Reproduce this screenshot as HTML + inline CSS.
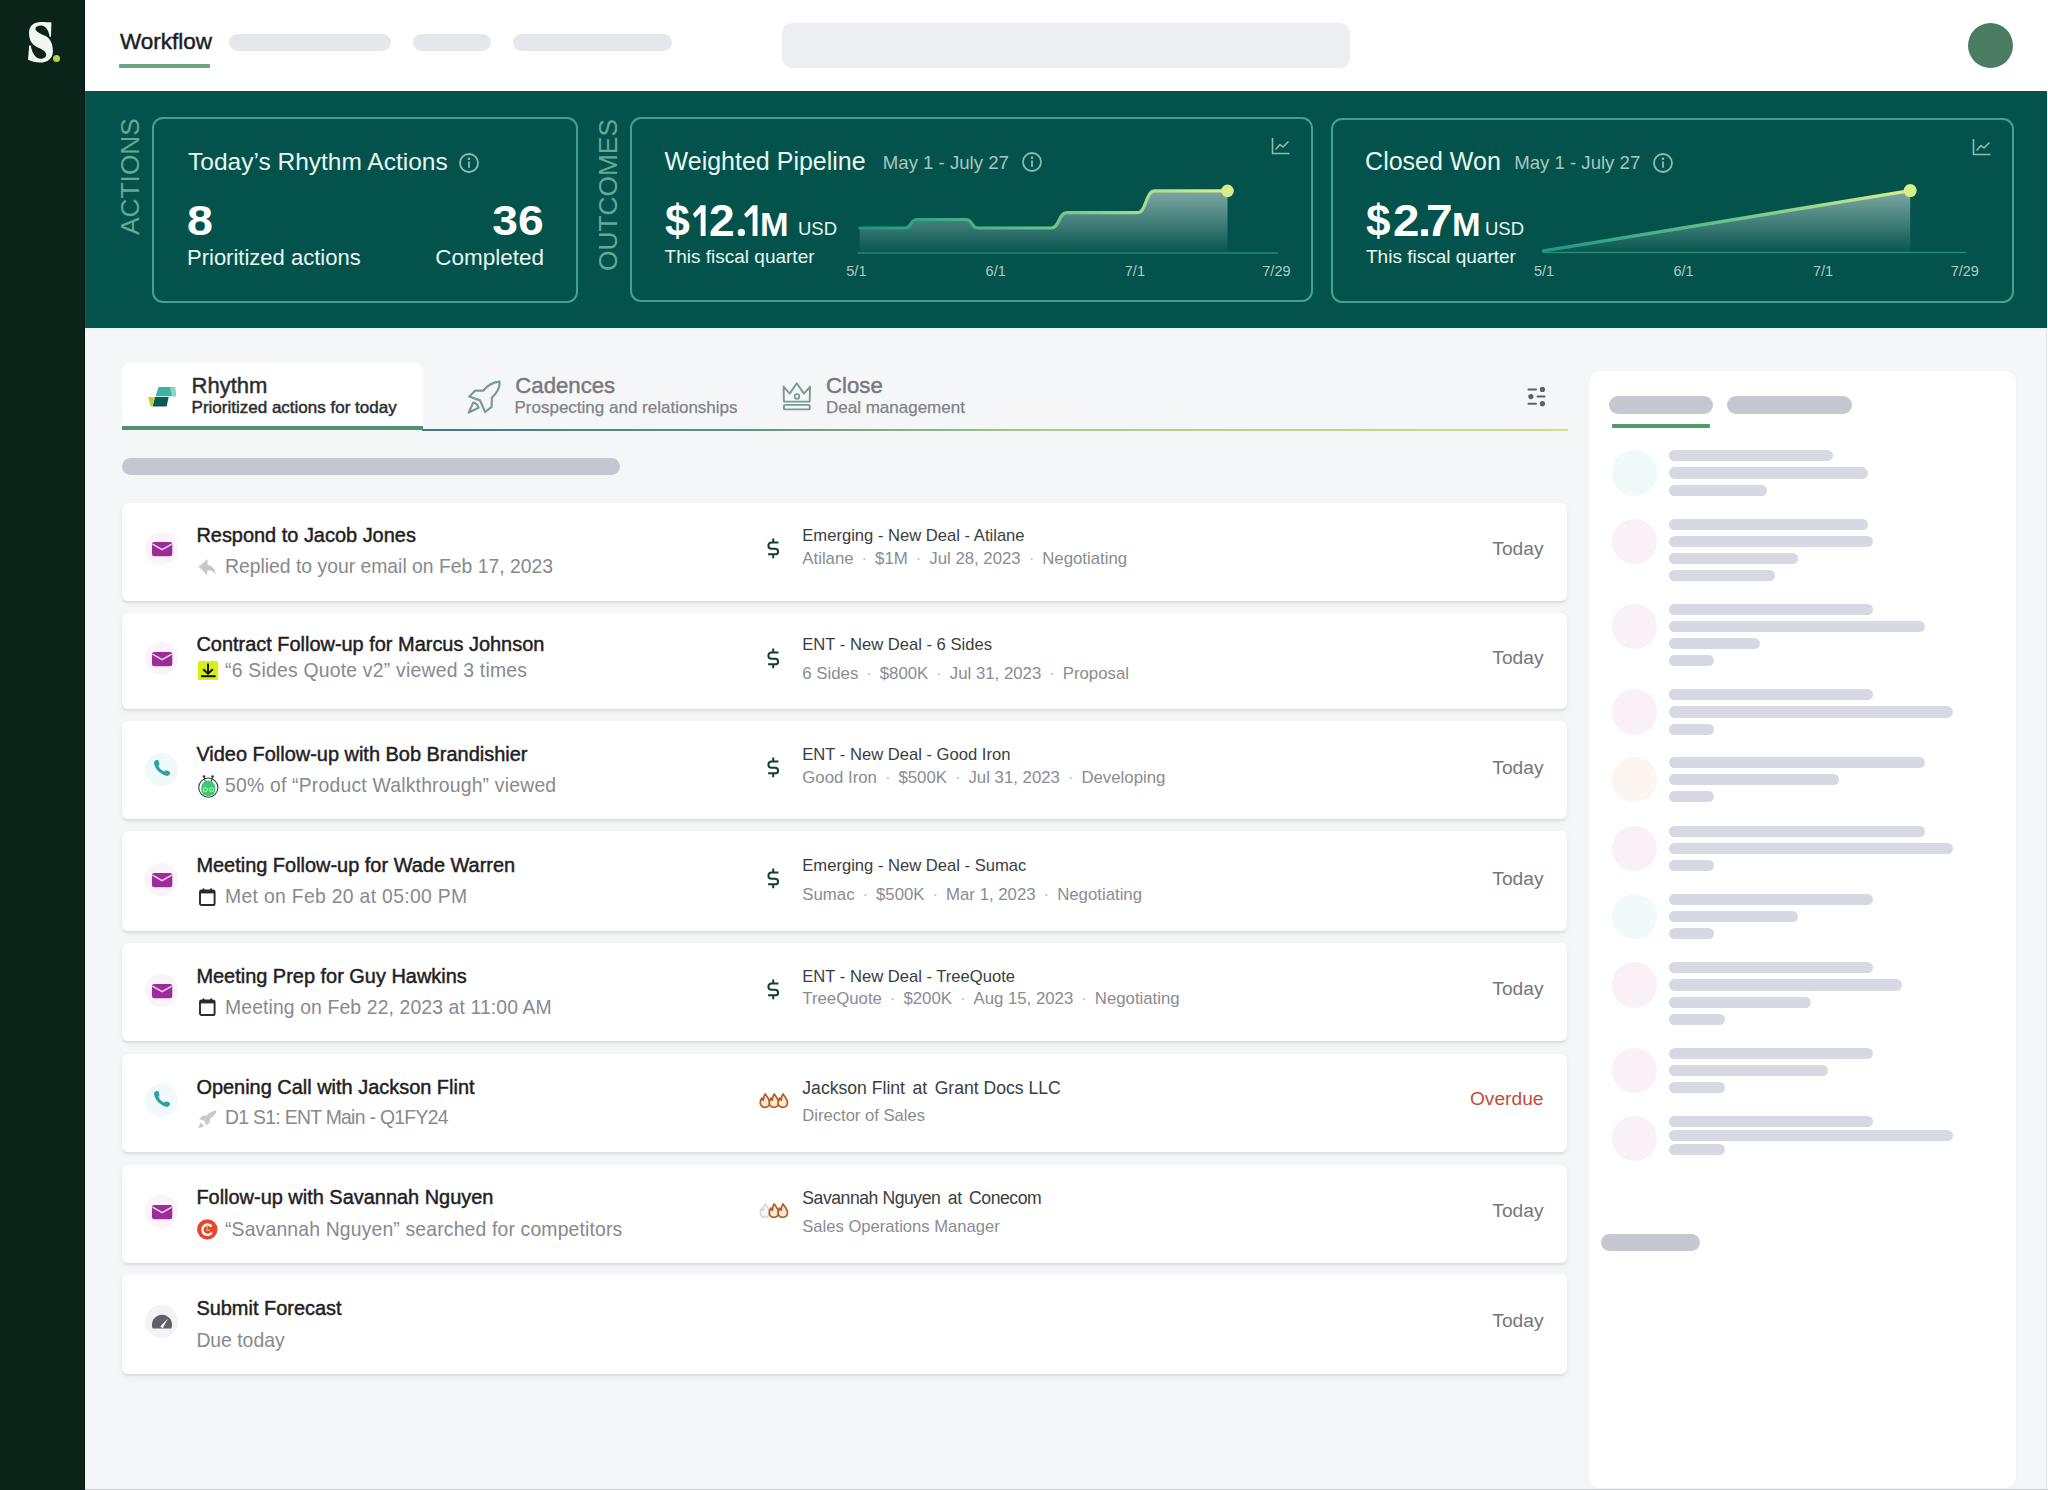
<!DOCTYPE html><html><head><meta charset="utf-8"><style>
*{box-sizing:border-box;margin:0;padding:0}
html,body{width:2048px;height:1490px;overflow:hidden;background:#f5f6f8;font-family:"Liberation Sans",sans-serif}
.t{position:absolute;white-space:nowrap;line-height:1}
.r{position:absolute}
.med{-webkit-text-stroke:0.45px currentColor}
.med2{-webkit-text-stroke:0.25px currentColor}
svg{position:absolute;overflow:visible}
</style></head><body>
<div class="r" style="left:0px;top:0px;width:85px;height:1490px;background:#0a2419;"></div>
<div class="r" style="left:84px;top:0px;width:1px;height:1490px;background:#06160f;"></div>
<svg style="left:0;top:0" width="85" height="80" viewBox="0 0 85 80"><path d="M51.4 22.4 L51 36.8 L49.6 36.8 C48.6 29.4 45.2 25.4 41.2 25.4 C37.6 25.4 35.4 26.8 35.4 28.8 C35.4 31.2 39.6 33.6 45 35.8 C50.6 38.2 52.9 44.4 52.9 51.4 C52.9 58.2 47.6 62.5 40.2 62.5 C35.6 62.5 31.2 61.4 28 59.8 L29.2 45.6 L30.8 45.6 C32 53 35.6 58.8 40.6 58.8 C44 58.8 46.2 57.2 46.2 54.8 C46.2 51.4 42.2 49.2 37.2 47.2 C31.6 44.8 29 39.4 29 32.6 C29 26 34 22 41 22 C45 22 48.4 22.4 51.4 22.4 Z" fill="#f4f6f2"/></svg>
<div class="r" style="left:52.5px;top:54.5px;width:7.5px;height:7.5px;border-radius:50%;background:#b5d334"></div>
<div class="r" style="left:85px;top:0px;width:1963px;height:91px;background:#ffffff;"></div>
<div class="t med" style="left:120.0px;top:30.5px;font-size:22.5px;color:#1c1d1f;font-weight:400;">Workflow</div>
<div class="r" style="left:119px;top:64px;width:91px;height:4px;background:#6aa57e;border-radius:1px"></div>
<div class="r" style="left:229px;top:34px;width:162px;height:17px;background:#e5e7ed;border-radius:9px"></div>
<div class="r" style="left:413px;top:34px;width:78px;height:17px;background:#e5e7ed;border-radius:9px"></div>
<div class="r" style="left:513px;top:34px;width:159px;height:17px;background:#e5e7ed;border-radius:9px"></div>
<div class="r" style="left:782px;top:23px;width:568px;height:45px;background:#eceef2;border-radius:10px"></div>
<div class="r" style="left:1967.5px;top:22.5px;width:45.5px;height:45.5px;border-radius:50%;background:#4a7b63"></div>
<div class="r" style="left:85px;top:91px;width:1962px;height:237px;background:#03534c;"></div>
<div class="r" style="left:85px;top:328px;width:1963px;height:3px;background:#e9f6f3;"></div>
<div class="r" style="left:85px;top:91px;width:1.3px;height:237px;background:#175a51;"></div>
<div class="r" style="left:2047px;top:91px;width:1px;height:237px;background:#dff3ef;"></div>
<div class="r" style="left:152px;top:117px;width:426px;height:185.5px;border:2px solid #3fa390;border-radius:11px"></div>
<div class="r" style="left:630px;top:117px;width:683px;height:185px;border:2px solid #3fa390;border-radius:11px"></div>
<div class="r" style="left:1331px;top:117.5px;width:683px;height:185px;border:2px solid #3fa390;border-radius:11px"></div>
<div class="t" style="left:117.4px;top:234.5px;font-size:26.3px;color:#66a898;transform-origin:0 0;transform:rotate(-90deg)">ACTIONS</div>
<div class="t" style="left:595.3px;top:270.5px;font-size:26.3px;color:#66a898;transform-origin:0 0;transform:rotate(-90deg)">OUTCOMES</div>
<div class="t " style="left:188.0px;top:150.3px;font-size:24.5px;color:#e9f6f1;font-weight:400;">Today’s Rhythm Actions</div>
<svg style="left:457.6px;top:152.4px" width="22" height="22" viewBox="0 0 22 22"><circle cx="11" cy="11" r="9" fill="none" stroke="#8dbcb1" stroke-width="1.8"/><circle cx="11" cy="6.8" r="1.3" fill="#8dbcb1"/><rect x="10.1" y="9.2" width="1.8" height="6.8" rx="0.8" fill="#8dbcb1"/></svg>
<div class="t " style="left:187.0px;top:199.9px;font-size:42px;color:#ffffff;font-weight:700;transform:scaleX(1.11);transform-origin:0 0">8</div>
<div class="t " style="right:1504.5px;top:199.9px;font-size:42px;color:#ffffff;font-weight:700;transform:scaleX(1.1);transform-origin:100% 0">36</div>
<div class="t " style="left:187.0px;top:247.2px;font-size:22px;color:#e9f6f1;font-weight:400;">Prioritized actions</div>
<div class="t " style="right:1504.0px;top:246.8px;font-size:22.5px;color:#e9f6f1;font-weight:400;">Completed</div>
<div class="t " style="left:664.6px;top:149.3px;font-size:25px;color:#e9f6f1;font-weight:400;">Weighted Pipeline</div>
<div class="t " style="left:1365.1px;top:149.3px;font-size:25px;color:#e9f6f1;font-weight:400;">Closed Won</div>
<div class="t " style="left:882.8px;top:153.6px;font-size:18.6px;color:#aac6bf;font-weight:400;">May 1 - July 27</div>
<div class="t " style="left:1514.2px;top:153.6px;font-size:18.6px;color:#aac6bf;font-weight:400;">May 1 - July 27</div>
<svg style="left:1020.7px;top:151.4px" width="22" height="22" viewBox="0 0 22 22"><circle cx="11" cy="11" r="9" fill="none" stroke="#8dbcb1" stroke-width="1.8"/><circle cx="11" cy="6.8" r="1.3" fill="#8dbcb1"/><rect x="10.1" y="9.2" width="1.8" height="6.8" rx="0.8" fill="#8dbcb1"/></svg>
<svg style="left:1651.6px;top:151.5px" width="22" height="22" viewBox="0 0 22 22"><circle cx="11" cy="11" r="9" fill="none" stroke="#8dbcb1" stroke-width="1.8"/><circle cx="11" cy="6.8" r="1.3" fill="#8dbcb1"/><rect x="10.1" y="9.2" width="1.8" height="6.8" rx="0.8" fill="#8dbcb1"/></svg>
<div class="t" style="left:665.21px;top:198.75px;font-size:44px;color:#fff;font-weight:700;transform-origin:0 0;transform:scaleX(1.014)">$</div>
<div class="t" style="left:709.30px;top:198.75px;font-size:44px;color:#fff;font-weight:700;transform-origin:0 0;transform:scaleX(1.048)">2</div>
<svg style="left:0;top:0" width="800" height="260" viewBox="0 0 800 260"><path d="M700.7 205.3 H705.6 V236 H700.7 V212.6 L695.2 217.8 L692.8 214.2 Z" fill="#fff"/><path d="M752.6 205.3 H757.5 V236 H752.6 V212.6 L746.4 217.8 L744 214.2 Z" fill="#fff"/><circle cx="741.4" cy="232.4" r="3.7" fill="#fff"/></svg>
<div class="t" style="left:760.20px;top:207.81px;font-size:33.3px;color:#fff;font-weight:700;transform-origin:0 0;transform:scaleX(1.031)">M</div>
<div class="t " style="left:798.0px;top:219.9px;font-size:18.5px;color:#e9f6f1;font-weight:400;">USD</div>
<div class="t" style="left:1366.02px;top:198.55px;font-size:44px;color:#fff;font-weight:700;transform-origin:0 0;transform:scaleX(1.001)">$</div>
<div class="t" style="left:1392.75px;top:198.55px;font-size:44px;color:#fff;font-weight:700;transform-origin:0 0;transform:scaleX(1.081)">2</div>
<div class="t" style="left:1418.23px;top:198.55px;font-size:44px;color:#fff;font-weight:700;transform-origin:0 0;transform:scaleX(1.063)">.</div>
<div class="t" style="left:1425.94px;top:198.55px;font-size:44px;color:#fff;font-weight:700;transform-origin:0 0;transform:scaleX(1.090)">7</div>
<div class="t" style="left:1451.50px;top:207.61px;font-size:33.3px;color:#fff;font-weight:700;transform-origin:0 0;transform:scaleX(1.031)">M</div>
<div class="t " style="left:1485.0px;top:219.9px;font-size:18.5px;color:#e9f6f1;font-weight:400;">USD</div>
<div class="t " style="left:664.6px;top:246.8px;font-size:19px;color:#e9f6f1;font-weight:400;">This fiscal quarter</div>
<div class="t " style="left:1366.0px;top:246.6px;font-size:19px;color:#e9f6f1;font-weight:400;">This fiscal quarter</div>
<svg style="left:1271px;top:137px" width="20" height="18" viewBox="0 0 20 18"><path d="M1.5 1 V16.5 H18.5" fill="none" stroke="#8dbcb1" stroke-width="1.6"/><path d="M5 12 L9 7.5 L12 10 L17 5" fill="none" stroke="#8dbcb1" stroke-width="1.6" stroke-linejoin="round" stroke-linecap="round"/></svg>
<svg style="left:1972px;top:138px" width="20" height="18" viewBox="0 0 20 18"><path d="M1.5 1 V16.5 H18.5" fill="none" stroke="#8dbcb1" stroke-width="1.6"/><path d="M5 12 L9 7.5 L12 10 L17 5" fill="none" stroke="#8dbcb1" stroke-width="1.6" stroke-linejoin="round" stroke-linecap="round"/></svg>
<svg style="left:0;top:0" width="2048" height="340" viewBox="0 0 2048 340">
<defs>
<linearGradient id="lg1" gradientUnits="userSpaceOnUse" x1="860" y1="0" x2="1228" y2="0"><stop offset="0" stop-color="#1a9880"/><stop offset="0.5" stop-color="#66c48c"/><stop offset="1" stop-color="#d9ef8b"/></linearGradient>
<linearGradient id="lg2" gradientUnits="userSpaceOnUse" x1="1543" y1="0" x2="1911" y2="0"><stop offset="0" stop-color="#1a9880"/><stop offset="0.5" stop-color="#66c48c"/><stop offset="1" stop-color="#d9ef8b"/></linearGradient>
<linearGradient id="fg1" gradientUnits="userSpaceOnUse" x1="0" y1="190" x2="0" y2="252"><stop offset="0" stop-color="#ffffff" stop-opacity="0.5"/><stop offset="1" stop-color="#ffffff" stop-opacity="0.02"/></linearGradient>
</defs>
<path d="M859.8 252 V228 H905 C912 228 910 219.5 917 219.5 H966 C973 219.5 971 228 978 228 H1051 C1060 228 1058 212.7 1067 212.7 H1137 C1147 212.7 1145 190.9 1155 190.9 H1227.5 V252 Z" fill="url(#fg1)"/>
<line x1="857.5" y1="253" x2="1278" y2="253" stroke="#2a8675" stroke-width="1.6"/>
<path d="M859.8 228 H905 C912 228 910 219.5 917 219.5 H966 C973 219.5 971 228 978 228 H1051 C1060 228 1058 212.7 1067 212.7 H1137 C1147 212.7 1145 190.9 1155 190.9 H1227.5" fill="none" stroke="url(#lg1)" stroke-width="3.2" stroke-linecap="round"/>
<circle cx="1227.5" cy="190.9" r="6.3" fill="#d8ee8a"/>
<path d="M1543.4 252 L1543.4 250.9 L1910.2 190.6 V252 Z" fill="url(#fg1)"/>
<line x1="1543" y1="252.5" x2="1966.4" y2="252.5" stroke="#2a8675" stroke-width="1.6"/>
<path d="M1543.4 250.9 L1910.2 190.6" fill="none" stroke="url(#lg2)" stroke-width="3.4" stroke-linecap="round"/>
<circle cx="1910.2" cy="190.6" r="6.5" fill="#d8ee8a"/>
</svg>
<div class="t " style="left:846.3px;top:263.7px;font-size:14.5px;color:#b0cbc5;font-weight:400;">5/1</div>
<div class="t " style="left:985.6px;top:263.7px;font-size:14.5px;color:#b0cbc5;font-weight:400;">6/1</div>
<div class="t " style="left:1124.8px;top:263.7px;font-size:14.5px;color:#b0cbc5;font-weight:400;">7/1</div>
<div class="t " style="left:1262.3px;top:263.7px;font-size:14.5px;color:#b0cbc5;font-weight:400;">7/29</div>
<div class="t " style="left:1534.0px;top:263.7px;font-size:14.5px;color:#b0cbc5;font-weight:400;">5/1</div>
<div class="t " style="left:1673.5px;top:263.7px;font-size:14.5px;color:#b0cbc5;font-weight:400;">6/1</div>
<div class="t " style="left:1813.0px;top:263.7px;font-size:14.5px;color:#b0cbc5;font-weight:400;">7/1</div>
<div class="t " style="left:1950.7px;top:263.7px;font-size:14.5px;color:#b0cbc5;font-weight:400;">7/29</div>
<div class="r" style="left:122px;top:362.5px;width:300.5px;height:67px;background:#fff;border-radius:8px 8px 0 0"></div>
<div class="r" style="left:422px;top:428.8px;width:1146px;height:1.8px;background:linear-gradient(90deg,#3f7a78 0%,#62977f 30%,#a9cc86 55%,#c9e28c 100%)"></div>
<div class="r" style="left:122px;top:426.3px;width:300.5px;height:4px;background:#4f9272;"></div>
<svg style="left:145px;top:384px" width="34" height="26" viewBox="0 0 34 26"><polygon points="13.5,3 30,3 31,12.2 10.6,12.2" fill="#3ab4a7"/><polygon points="25,3.5 30,3 31,12.2 27,12.2" fill="#8fd3cb"/><polygon points="10,13 23.7,13 21.6,22.4 7.6,22.4" fill="#0c5a4f"/><polygon points="3,13 10,13 7.6,22.4 5.7,22.4" fill="#b7d43a"/></svg>
<div class="t med" style="left:191.6px;top:375.1px;font-size:22px;color:#2a2d32;font-weight:400;">Rhythm</div>
<div class="t med" style="left:191.6px;top:399.4px;font-size:17px;color:#2a2d32;font-weight:400;">Prioritized actions for today</div>
<svg style="left:460px;top:372px" width="60" height="48" viewBox="0 0 60 48"><path d="M39.6 9.7 C34 10 28 13 23.2 18.7 L15 18.7 L9.3 24.5 L20 28.4 L25.1 40 L31.6 34.8 L31.9 25.8 C37 21 40 15 39.6 9.7 Z" fill="none" stroke="#7b9b94" stroke-width="2.2" stroke-linejoin="round"/><path d="M8.7 40.6 L13.2 30.6 C15.5 30.8 17.6 32.5 18.6 35.8 Z" fill="none" stroke="#7b9b94" stroke-width="2.2" stroke-linejoin="round"/></svg>
<div class="t med" style="left:515.3px;top:374.9px;font-size:22.2px;color:#77797e;font-weight:400;">Cadences</div>
<div class="t med2" style="left:514.5px;top:399.4px;font-size:17px;color:#818389;font-weight:400;">Prospecting and relationships</div>
<svg style="left:772px;top:372px" width="50" height="48" viewBox="0 0 50 48"><path d="M11.9 29.6 L11.6 14.5 L17.7 21.6 L24.8 11.3 L31.9 21.6 L38 14.8 L37.7 29.6 Z" fill="none" stroke="#7b9b94" stroke-width="1.9" stroke-linejoin="round"/><circle cx="25" cy="24.5" r="2.3" fill="none" stroke="#7b9b94" stroke-width="1.7"/><rect x="11.9" y="32.9" width="25.8" height="4.5" rx="1" fill="none" stroke="#7b9b94" stroke-width="1.9"/></svg>
<div class="t med" style="left:826.0px;top:374.9px;font-size:22.2px;color:#77797e;font-weight:400;">Close</div>
<div class="t med2" style="left:826.0px;top:399.4px;font-size:17px;color:#818389;font-weight:400;">Deal management</div>
<svg style="left:1520px;top:380px" width="32" height="32" viewBox="0 0 32 32"><g stroke="#5d6067" stroke-width="2" stroke-linecap="round"><line x1="8.5" y1="9.4" x2="16" y2="9.4"/><line x1="17.5" y1="16.6" x2="24.5" y2="16.6"/><line x1="8.5" y1="23.7" x2="16" y2="23.7"/></g><g fill="#5d6067"><circle cx="22.4" cy="9.4" r="2.6"/><circle cx="10.9" cy="16.6" r="2.6"/><circle cx="22.4" cy="23.7" r="2.6"/></g></svg>
<div class="r" style="left:122px;top:457.8px;width:498px;height:17px;background:#c4c7d0;border-radius:9px"></div>
<div class="r" style="left:122px;top:502.5px;width:1444.5px;height:98.5px;background:#fff;border-radius:6px;box-shadow:0 1.5px 2px rgba(30,35,50,0.09),0 3px 8px rgba(30,35,50,0.035)"></div>
<div class="r" style="left:145.1px;top:531.8px;width:33px;height:33px;border-radius:50%;background:#fbf3fa"></div>
<svg style="left:150.9px;top:539.8px" width="22" height="18" viewBox="0 0 22 18"><rect x="1" y="2" width="20.3" height="14.2" rx="2.2" fill="#9a2d97"/><path d="M1.5 4.2 L11.1 9.6 L20.8 4.2" fill="none" stroke="#f6d3f3" stroke-width="1.5"/></svg>
<div class="t med" style="left:196.4px;top:526.1px;font-size:19.95px;color:#1f2023;font-weight:400;">Respond to Jacob Jones</div>
<svg style="left:194px;top:555.0px" width="28" height="25" viewBox="0 0 28 25"><path d="M13.4 4.2 L4.6 11.8 L13.1 20.2 L13.4 15.3 C17 15.2 19.8 16.6 21.9 19.4 C21.2 14.4 18 10.6 13.6 9.8 Z" fill="#c6c6cb"/><path d="M9.6 7.8 L5.6 11.8 L9.4 15.8" fill="none" stroke="#d9d9de" stroke-width="1"/></svg>
<div class="t " style="left:225.0px;top:557.1px;font-size:19.35px;color:#87898e;font-weight:400;letter-spacing:0.00px">Replied to your email on Feb 17, 2023</div>
<svg style="left:767.2px;top:538.4px" width="14" height="22" viewBox="0 0 14 22"><path d="M6.2 0.6 V4.4 M6.2 16.2 V20.2 M11.4 4.6 H4.6 C2.4 4.6 1.4 5.8 1.4 7.8 C1.4 9.8 2.6 10.8 4.6 10.8 H8 C10 10.8 11.1 11.9 11.1 13.9 C11.1 15.8 10 16.3 8 16.3 H1.1" fill="none" stroke="#123f2f" stroke-width="2"/></svg>
<div class="t " style="left:802.3px;top:527.9px;font-size:16.6px;color:#3b3d41;font-weight:400;">Emerging - New Deal - Atilane</div>
<div class="t " style="left:802.3px;top:550.5px;font-size:16.8px;color:#8a8c91;font-weight:400;"><span>Atilane</span><span style="display:inline-block;width:21.5px;text-align:center;color:#bbbdc1">·</span><span>$1M</span><span style="display:inline-block;width:21.5px;text-align:center;color:#bbbdc1">·</span><span>Jul 28, 2023</span><span style="display:inline-block;width:21.5px;text-align:center;color:#bbbdc1">·</span><span>Negotiating</span></div>
<div class="t " style="right:504.5px;top:539.1px;font-size:19.2px;color:#75777c;font-weight:400;">Today</div>
<div class="r" style="left:122px;top:613.2px;width:1444.5px;height:95.6px;background:#fff;border-radius:6px;box-shadow:0 1.5px 2px rgba(30,35,50,0.09),0 3px 8px rgba(30,35,50,0.035)"></div>
<div class="r" style="left:145.1px;top:642.4px;width:33px;height:33px;border-radius:50%;background:#fbf3fa"></div>
<svg style="left:150.9px;top:650.4px" width="22" height="18" viewBox="0 0 22 18"><rect x="1" y="2" width="20.3" height="14.2" rx="2.2" fill="#9a2d97"/><path d="M1.5 4.2 L11.1 9.6 L20.8 4.2" fill="none" stroke="#f6d3f3" stroke-width="1.5"/></svg>
<div class="t med" style="left:196.4px;top:635.1px;font-size:19.95px;color:#1f2023;font-weight:400;">Contract Follow-up for Marcus Johnson</div>
<svg style="left:197.5px;top:661.3px" width="20" height="19" viewBox="0 0 20 19"><rect x="0" y="0" width="20" height="19" rx="1.5" fill="#d9ef0c"/><path d="M10 2.4 V12.6 M5.2 8.2 L10 12.6 L14.8 8.2" fill="none" stroke="#111" stroke-width="1.9"/><rect x="3" y="14.2" width="14.6" height="2" fill="#111"/></svg>
<div class="t " style="left:225.0px;top:661.1px;font-size:19.35px;color:#87898e;font-weight:400;letter-spacing:0.23px">“6 Sides Quote v2” viewed 3 times</div>
<svg style="left:767.2px;top:647.8px" width="14" height="22" viewBox="0 0 14 22"><path d="M6.2 0.6 V4.4 M6.2 16.2 V20.2 M11.4 4.6 H4.6 C2.4 4.6 1.4 5.8 1.4 7.8 C1.4 9.8 2.6 10.8 4.6 10.8 H8 C10 10.8 11.1 11.9 11.1 13.9 C11.1 15.8 10 16.3 8 16.3 H1.1" fill="none" stroke="#123f2f" stroke-width="2"/></svg>
<div class="t " style="left:802.3px;top:637.3px;font-size:16.6px;color:#3b3d41;font-weight:400;">ENT - New Deal - 6 Sides</div>
<div class="t " style="left:802.3px;top:665.8px;font-size:16.8px;color:#8a8c91;font-weight:400;"><span>6 Sides</span><span style="display:inline-block;width:21.5px;text-align:center;color:#bbbdc1">·</span><span>$800K</span><span style="display:inline-block;width:21.5px;text-align:center;color:#bbbdc1">·</span><span>Jul 31, 2023</span><span style="display:inline-block;width:21.5px;text-align:center;color:#bbbdc1">·</span><span>Proposal</span></div>
<div class="t " style="right:504.5px;top:648.2px;font-size:19.2px;color:#75777c;font-weight:400;">Today</div>
<div class="r" style="left:122px;top:721px;width:1444.5px;height:98.3px;background:#fff;border-radius:6px;box-shadow:0 1.5px 2px rgba(30,35,50,0.09),0 3px 8px rgba(30,35,50,0.035)"></div>
<div class="r" style="left:145.1px;top:752.8px;width:33px;height:33px;border-radius:50%;background:#f0fafa"></div>
<svg style="left:151.9px;top:757.8px" width="20" height="20" viewBox="0 0 20 20"><path d="M3.8 2.2 C5.2 1.5 6.4 2 6.8 3.2 L7.4 5.6 C7.6 6.6 7 7.2 6.4 7.6 C7.3 10.4 9.4 12.6 12.2 13.6 C12.6 13 13.3 12.4 14.3 12.6 L16.8 13.2 C18 13.6 18.4 14.8 17.8 16.1 C17.1 17.6 15.6 18.2 14 17.8 C8.6 16.4 3.6 11.4 2.2 6 C1.8 4.4 2.4 2.9 3.8 2.2 Z" fill="#2ba3a3"/></svg>
<div class="t med" style="left:196.4px;top:745.4px;font-size:19.95px;color:#1f2023;font-weight:400;">Video Follow-up with Bob Brandishier</div>
<svg style="left:197.5px;top:774.7px" width="21" height="23" viewBox="0 0 21 23"><circle cx="10.3" cy="12.6" r="9.6" fill="#fff" stroke="#3a3d3f" stroke-width="1.1"/><path d="M3.2 14 C3.2 9 6 5.5 10.3 5.5 C14.6 5.5 17.4 9 17.4 14 C17.4 18.5 14.5 21 10.3 21 C6.1 21 3.2 18.5 3.2 14 Z" fill="#3ccb6c"/><circle cx="7.3" cy="14.7" r="2" fill="none" stroke="#c8f7d5" stroke-width="1"/><circle cx="13.6" cy="14.7" r="2" fill="none" stroke="#c8f7d5" stroke-width="1"/><path d="M6.2 2 L7.2 6.5 M14.4 2 L13.4 6.5" stroke="#3a3d3f" stroke-width="1"/><circle cx="6" cy="1.6" r="1.4" fill="#3a4a4a"/><circle cx="14.6" cy="1.6" r="1.4" fill="#3a4a4a"/></svg>
<div class="t " style="left:225.0px;top:776.3px;font-size:19.35px;color:#87898e;font-weight:400;letter-spacing:0.21px">50% of “Product Walkthrough” viewed</div>
<svg style="left:767.2px;top:757.1px" width="14" height="22" viewBox="0 0 14 22"><path d="M6.2 0.6 V4.4 M6.2 16.2 V20.2 M11.4 4.6 H4.6 C2.4 4.6 1.4 5.8 1.4 7.8 C1.4 9.8 2.6 10.8 4.6 10.8 H8 C10 10.8 11.1 11.9 11.1 13.9 C11.1 15.8 10 16.3 8 16.3 H1.1" fill="none" stroke="#123f2f" stroke-width="2"/></svg>
<div class="t " style="left:802.3px;top:746.6px;font-size:16.6px;color:#3b3d41;font-weight:400;">ENT - New Deal - Good Iron</div>
<div class="t " style="left:802.3px;top:769.5px;font-size:16.8px;color:#8a8c91;font-weight:400;"><span>Good Iron</span><span style="display:inline-block;width:21.5px;text-align:center;color:#bbbdc1">·</span><span>$500K</span><span style="display:inline-block;width:21.5px;text-align:center;color:#bbbdc1">·</span><span>Jul 31, 2023</span><span style="display:inline-block;width:21.5px;text-align:center;color:#bbbdc1">·</span><span>Developing</span></div>
<div class="t " style="right:504.5px;top:758.2px;font-size:19.2px;color:#75777c;font-weight:400;">Today</div>
<div class="r" style="left:122px;top:831.1px;width:1444.5px;height:99.9px;background:#fff;border-radius:6px;box-shadow:0 1.5px 2px rgba(30,35,50,0.09),0 3px 8px rgba(30,35,50,0.035)"></div>
<div class="r" style="left:145.1px;top:863.3px;width:33px;height:33px;border-radius:50%;background:#fbf3fa"></div>
<svg style="left:150.9px;top:871.3px" width="22" height="18" viewBox="0 0 22 18"><rect x="1" y="2" width="20.3" height="14.2" rx="2.2" fill="#9a2d97"/><path d="M1.5 4.2 L11.1 9.6 L20.8 4.2" fill="none" stroke="#f6d3f3" stroke-width="1.5"/></svg>
<div class="t med" style="left:196.4px;top:855.9px;font-size:19.95px;color:#1f2023;font-weight:400;">Meeting Follow-up for Wade Warren</div>
<svg style="left:199px;top:887.6px" width="17" height="18" viewBox="0 0 17 18"><rect x="1" y="2.4" width="14.6" height="14.6" rx="1.6" fill="none" stroke="#2a2a2c" stroke-width="1.9"/><rect x="1" y="2.4" width="14.6" height="3" fill="#2a2a2c"/><rect x="3.6" y="0.3" width="1.8" height="3" rx="0.8" fill="#2a2a2c"/><rect x="11.2" y="0.3" width="1.8" height="3" rx="0.8" fill="#2a2a2c"/></svg>
<div class="t " style="left:225.0px;top:886.8px;font-size:19.35px;color:#87898e;font-weight:400;letter-spacing:0.32px">Met on Feb 20 at 05:00 PM</div>
<svg style="left:767.2px;top:868.4px" width="14" height="22" viewBox="0 0 14 22"><path d="M6.2 0.6 V4.4 M6.2 16.2 V20.2 M11.4 4.6 H4.6 C2.4 4.6 1.4 5.8 1.4 7.8 C1.4 9.8 2.6 10.8 4.6 10.8 H8 C10 10.8 11.1 11.9 11.1 13.9 C11.1 15.8 10 16.3 8 16.3 H1.1" fill="none" stroke="#123f2f" stroke-width="2"/></svg>
<div class="t " style="left:802.3px;top:857.9px;font-size:16.6px;color:#3b3d41;font-weight:400;">Emerging - New Deal - Sumac</div>
<div class="t " style="left:802.3px;top:886.6px;font-size:16.8px;color:#8a8c91;font-weight:400;"><span>Sumac</span><span style="display:inline-block;width:21.5px;text-align:center;color:#bbbdc1">·</span><span>$500K</span><span style="display:inline-block;width:21.5px;text-align:center;color:#bbbdc1">·</span><span>Mar 1, 2023</span><span style="display:inline-block;width:21.5px;text-align:center;color:#bbbdc1">·</span><span>Negotiating</span></div>
<div class="t " style="right:504.5px;top:868.7px;font-size:19.2px;color:#75777c;font-weight:400;">Today</div>
<div class="r" style="left:122px;top:942.8px;width:1444.5px;height:97.9px;background:#fff;border-radius:6px;box-shadow:0 1.5px 2px rgba(30,35,50,0.09),0 3px 8px rgba(30,35,50,0.035)"></div>
<div class="r" style="left:145.1px;top:973.8px;width:33px;height:33px;border-radius:50%;background:#fbf3fa"></div>
<svg style="left:150.9px;top:981.8px" width="22" height="18" viewBox="0 0 22 18"><rect x="1" y="2" width="20.3" height="14.2" rx="2.2" fill="#9a2d97"/><path d="M1.5 4.2 L11.1 9.6 L20.8 4.2" fill="none" stroke="#f6d3f3" stroke-width="1.5"/></svg>
<div class="t med" style="left:196.4px;top:966.6px;font-size:19.95px;color:#1f2023;font-weight:400;">Meeting Prep for Guy Hawkins</div>
<svg style="left:199px;top:998.4px" width="17" height="18" viewBox="0 0 17 18"><rect x="1" y="2.4" width="14.6" height="14.6" rx="1.6" fill="none" stroke="#2a2a2c" stroke-width="1.9"/><rect x="1" y="2.4" width="14.6" height="3" fill="#2a2a2c"/><rect x="3.6" y="0.3" width="1.8" height="3" rx="0.8" fill="#2a2a2c"/><rect x="11.2" y="0.3" width="1.8" height="3" rx="0.8" fill="#2a2a2c"/></svg>
<div class="t " style="left:225.0px;top:997.6px;font-size:19.35px;color:#87898e;font-weight:400;letter-spacing:0.13px">Meeting on Feb 22, 2023 at 11:00 AM</div>
<svg style="left:767.2px;top:979.0px" width="14" height="22" viewBox="0 0 14 22"><path d="M6.2 0.6 V4.4 M6.2 16.2 V20.2 M11.4 4.6 H4.6 C2.4 4.6 1.4 5.8 1.4 7.8 C1.4 9.8 2.6 10.8 4.6 10.8 H8 C10 10.8 11.1 11.9 11.1 13.9 C11.1 15.8 10 16.3 8 16.3 H1.1" fill="none" stroke="#123f2f" stroke-width="2"/></svg>
<div class="t " style="left:802.3px;top:968.5px;font-size:16.6px;color:#3b3d41;font-weight:400;">ENT - New Deal - TreeQuote</div>
<div class="t " style="left:802.3px;top:991.1px;font-size:16.8px;color:#8a8c91;font-weight:400;"><span>TreeQuote</span><span style="display:inline-block;width:21.5px;text-align:center;color:#bbbdc1">·</span><span>$200K</span><span style="display:inline-block;width:21.5px;text-align:center;color:#bbbdc1">·</span><span>Aug 15, 2023</span><span style="display:inline-block;width:21.5px;text-align:center;color:#bbbdc1">·</span><span>Negotiating</span></div>
<div class="t " style="right:504.5px;top:979.2px;font-size:19.2px;color:#75777c;font-weight:400;">Today</div>
<div class="r" style="left:122px;top:1053.6px;width:1444.5px;height:98.8px;background:#fff;border-radius:6px;box-shadow:0 1.5px 2px rgba(30,35,50,0.09),0 3px 8px rgba(30,35,50,0.035)"></div>
<div class="r" style="left:145.1px;top:1084.3px;width:33px;height:33px;border-radius:50%;background:#f0fafa"></div>
<svg style="left:151.9px;top:1089.3px" width="20" height="20" viewBox="0 0 20 20"><path d="M3.8 2.2 C5.2 1.5 6.4 2 6.8 3.2 L7.4 5.6 C7.6 6.6 7 7.2 6.4 7.6 C7.3 10.4 9.4 12.6 12.2 13.6 C12.6 13 13.3 12.4 14.3 12.6 L16.8 13.2 C18 13.6 18.4 14.8 17.8 16.1 C17.1 17.6 15.6 18.2 14 17.8 C8.6 16.4 3.6 11.4 2.2 6 C1.8 4.4 2.4 2.9 3.8 2.2 Z" fill="#2ba3a3"/></svg>
<div class="t med" style="left:196.4px;top:1077.7px;font-size:19.95px;color:#1f2023;font-weight:400;">Opening Call with Jackson Flint</div>
<svg style="left:197.8px;top:1109.6px" width="19" height="19" viewBox="0 0 19 19"><path d="M18.5 0.5 C14.5 0.6 11 2.5 8.6 5.6 L4.2 5.8 L1.2 9.2 L6 10.6 L8.4 15.4 L11.8 12.4 L12.2 8.4 C15.6 6.2 18.2 3.8 18.5 0.5 Z" fill="#c9c9cd"/><path d="M0.3 18.6 L2.6 12.6 L6.3 16.3 Z" fill="#c9c9cd"/></svg>
<div class="t " style="left:225.0px;top:1108.1px;font-size:19.35px;color:#87898e;font-weight:400;letter-spacing:-0.69px">D1 S1: ENT Main - Q1FY24</div>
<svg style="left:759.5px;top:1093px" width="28" height="15" viewBox="0 0 28 15"><path d="M5.2 1 C7.1000000000000005 3.8 9.7 6.4 9.7 9.8 C9.7 12.6 7.5 14.3 4.9 14.3 C2.3000000000000003 14.3 0.3000000000000007 12.6 0.3000000000000007 10 C0.3000000000000007 7.8 1.0000000000000004 6.2 1.8000000000000003 5.1 C2.2 6.3 2.8000000000000003 6.9 3.4000000000000004 7.1 C3.4000000000000004 4.8 4.0 2.6 5.2 1 Z" fill="#fde8d2" stroke="#ad602e" stroke-width="1.8" stroke-linejoin="round"/><path d="M14.200000000000001 1 C16.1 3.8 18.7 6.4 18.7 9.8 C18.7 12.6 16.5 14.3 13.9 14.3 C11.3 14.3 9.3 12.6 9.3 10 C9.3 7.8 10.0 6.2 10.8 5.1 C11.2 6.3 11.8 6.9 12.4 7.1 C12.4 4.8 13.0 2.6 14.200000000000001 1 Z" fill="#fde8d2" stroke="#ad602e" stroke-width="1.8" stroke-linejoin="round"/><path d="M23.0 1 C24.9 3.8 27.5 6.4 27.5 9.8 C27.5 12.6 25.3 14.3 22.7 14.3 C20.099999999999998 14.3 18.1 12.6 18.1 10 C18.1 7.8 18.8 6.2 19.599999999999998 5.1 C20.0 6.3 20.599999999999998 6.9 21.2 7.1 C21.2 4.8 21.8 2.6 23.0 1 Z" fill="#fde8d2" stroke="#ad602e" stroke-width="1.8" stroke-linejoin="round"/></svg>
<div class="t " style="left:802.3px;top:1080.1px;font-size:17.6px;color:#3b3d41;font-weight:400;">Jackson Flint<span style="margin:0 7.5px 0 7.5px">at</span>Grant Docs LLC</div>
<div class="t " style="left:802.3px;top:1107.6px;font-size:16.6px;color:#8a8c91;font-weight:400;">Director of Sales</div>
<div class="t " style="right:504.5px;top:1089.4px;font-size:19.2px;color:#c24d36;font-weight:400;">Overdue</div>
<div class="r" style="left:122px;top:1165.3px;width:1444.5px;height:97.9px;background:#fff;border-radius:6px;box-shadow:0 1.5px 2px rgba(30,35,50,0.09),0 3px 8px rgba(30,35,50,0.035)"></div>
<div class="r" style="left:145.1px;top:1194.8px;width:33px;height:33px;border-radius:50%;background:#fbf3fa"></div>
<svg style="left:150.9px;top:1202.8px" width="22" height="18" viewBox="0 0 22 18"><rect x="1" y="2" width="20.3" height="14.2" rx="2.2" fill="#9a2d97"/><path d="M1.5 4.2 L11.1 9.6 L20.8 4.2" fill="none" stroke="#f6d3f3" stroke-width="1.5"/></svg>
<div class="t med" style="left:196.4px;top:1188.2px;font-size:19.95px;color:#1f2023;font-weight:400;">Follow-up with Savannah Nguyen</div>
<svg style="left:197.3px;top:1219.0px" width="21" height="21" viewBox="0 0 21 21"><circle cx="10.3" cy="10.4" r="10.2" fill="#e9442c"/><path d="M14.6 7.4 A5.2 5.2 0 1 0 14.9 13.6" fill="none" stroke="#fff" stroke-width="2.4"/><path d="M8.6 8 L10.4 6.8 L10 11.4 L13 11.4" fill="none" stroke="#f2a25a" stroke-width="1.2"/></svg>
<div class="t " style="left:225.0px;top:1220.0px;font-size:19.35px;color:#87898e;font-weight:400;letter-spacing:0.17px">“Savannah Nguyen” searched for competitors</div>
<svg style="left:759.5px;top:1203.2px" width="28" height="15" viewBox="0 0 28 15"><path d="M5.2 1 C7.1000000000000005 3.8 9.7 6.4 9.7 9.8 C9.7 12.6 7.5 14.3 4.9 14.3 C2.3000000000000003 14.3 0.3000000000000007 12.6 0.3000000000000007 10 C0.3000000000000007 7.8 1.0000000000000004 6.2 1.8000000000000003 5.1 C2.2 6.3 2.8000000000000003 6.9 3.4000000000000004 7.1 C3.4000000000000004 4.8 4.0 2.6 5.2 1 Z" fill="#f7f7f8" stroke="#d9d9dd" stroke-width="1.8" stroke-linejoin="round"/><path d="M14.200000000000001 1 C16.1 3.8 18.7 6.4 18.7 9.8 C18.7 12.6 16.5 14.3 13.9 14.3 C11.3 14.3 9.3 12.6 9.3 10 C9.3 7.8 10.0 6.2 10.8 5.1 C11.2 6.3 11.8 6.9 12.4 7.1 C12.4 4.8 13.0 2.6 14.200000000000001 1 Z" fill="#fde8d2" stroke="#ad602e" stroke-width="1.8" stroke-linejoin="round"/><path d="M23.0 1 C24.9 3.8 27.5 6.4 27.5 9.8 C27.5 12.6 25.3 14.3 22.7 14.3 C20.099999999999998 14.3 18.1 12.6 18.1 10 C18.1 7.8 18.8 6.2 19.599999999999998 5.1 C20.0 6.3 20.599999999999998 6.9 21.2 7.1 C21.2 4.8 21.8 2.6 23.0 1 Z" fill="#fde8d2" stroke="#ad602e" stroke-width="1.8" stroke-linejoin="round"/></svg>
<div class="t " style="left:802.3px;top:1190.3px;font-size:17.6px;color:#3b3d41;font-weight:400;letter-spacing:-0.45px">Savannah Nguyen<span style="margin:0 7.5px 0 7.5px">at</span>Conecom</div>
<div class="t " style="left:802.3px;top:1219.1px;font-size:16.6px;color:#8a8c91;font-weight:400;">Sales Operations Manager</div>
<div class="t " style="right:504.5px;top:1200.5px;font-size:19.2px;color:#75777c;font-weight:400;">Today</div>
<div class="r" style="left:122px;top:1274.4px;width:1444.5px;height:99.6px;background:#fff;border-radius:6px;box-shadow:0 1.5px 2px rgba(30,35,50,0.09),0 3px 8px rgba(30,35,50,0.035)"></div>
<div class="r" style="left:145.1px;top:1305.3px;width:33px;height:33px;border-radius:50%;background:#f3f3f5"></div>
<svg style="left:150.9px;top:1311.3px" width="22" height="22" viewBox="0 0 22 22"><path d="M1.6 17.5 A10.1 10.1 0 1 1 20.4 17.5 Z" fill="#5e6169"/><path d="M9.3 15.6 L17 7.6 L11.6 17.2 Z" fill="#fff"/></svg>
<div class="t med" style="left:196.4px;top:1299.4px;font-size:19.95px;color:#1f2023;font-weight:400;">Submit Forecast</div>
<div class="t " style="left:196.4px;top:1330.6px;font-size:19.35px;color:#87898e;font-weight:400;letter-spacing:0.00px">Due today</div>
<div class="t " style="right:504.5px;top:1311.1px;font-size:19.2px;color:#75777c;font-weight:400;">Today</div>
<div class="r" style="left:1589px;top:371px;width:426.5px;height:1117px;background:#fff;border-radius:10px;box-shadow:0 0 2px rgba(30,35,50,0.06)"></div>
<div class="r" style="left:1609px;top:396px;width:104px;height:18px;background:#c5c8d1;border-radius:9px"></div>
<div class="r" style="left:1727px;top:396px;width:125px;height:18px;background:#c5c8d1;border-radius:9px"></div>
<div class="r" style="left:1612px;top:423.5px;width:98px;height:4.5px;background:#4e9b66;border-radius:1px"></div>
<div class="r" style="left:1611.8999999999999px;top:450.3px;width:45.4px;height:45.4px;border-radius:50%;background:#f0fafa"></div>
<div class="r" style="left:1669px;top:450.3px;width:164.3px;height:11.2px;border-radius:6px;background:#d6d9e2"></div>
<div class="r" style="left:1669px;top:467.4px;width:198.9px;height:11.2px;border-radius:6px;background:#d6d9e2"></div>
<div class="r" style="left:1669px;top:484.5px;width:97.6px;height:11.2px;border-radius:6px;background:#d6d9e2"></div>
<div class="r" style="left:1611.8999999999999px;top:518.5999999999999px;width:45.4px;height:45.4px;border-radius:50%;background:#f9f0f8"></div>
<div class="r" style="left:1669px;top:518.6px;width:198.9px;height:11.2px;border-radius:6px;background:#d6d9e2"></div>
<div class="r" style="left:1669px;top:535.7px;width:204.2px;height:11.2px;border-radius:6px;background:#d6d9e2"></div>
<div class="r" style="left:1669px;top:552.8px;width:128.9px;height:11.2px;border-radius:6px;background:#d6d9e2"></div>
<div class="r" style="left:1669px;top:569.9px;width:105.9px;height:11.2px;border-radius:6px;background:#d6d9e2"></div>
<div class="r" style="left:1611.8999999999999px;top:603.9px;width:45.4px;height:45.4px;border-radius:50%;background:#f9f0f8"></div>
<div class="r" style="left:1669px;top:603.9px;width:204.2px;height:11.2px;border-radius:6px;background:#d6d9e2"></div>
<div class="r" style="left:1669px;top:621.0px;width:255.6px;height:11.2px;border-radius:6px;background:#d6d9e2"></div>
<div class="r" style="left:1669px;top:638.1px;width:90.5px;height:11.2px;border-radius:6px;background:#d6d9e2"></div>
<div class="r" style="left:1669px;top:655.2px;width:45.3px;height:11.2px;border-radius:6px;background:#d6d9e2"></div>
<div class="r" style="left:1611.8999999999999px;top:689.3px;width:45.4px;height:45.4px;border-radius:50%;background:#f9f0f8"></div>
<div class="r" style="left:1669px;top:689.3px;width:204.2px;height:11.2px;border-radius:6px;background:#d6d9e2"></div>
<div class="r" style="left:1669px;top:706.4px;width:283.9px;height:11.2px;border-radius:6px;background:#d6d9e2"></div>
<div class="r" style="left:1669px;top:723.5px;width:45.3px;height:11.2px;border-radius:6px;background:#d6d9e2"></div>
<div class="r" style="left:1611.8999999999999px;top:756.9px;width:45.4px;height:45.4px;border-radius:50%;background:#fdf5ef"></div>
<div class="r" style="left:1669px;top:756.9px;width:255.6px;height:11.2px;border-radius:6px;background:#d6d9e2"></div>
<div class="r" style="left:1669px;top:774.0px;width:170.2px;height:11.2px;border-radius:6px;background:#d6d9e2"></div>
<div class="r" style="left:1669px;top:791.1px;width:45.3px;height:11.2px;border-radius:6px;background:#d6d9e2"></div>
<div class="r" style="left:1611.8999999999999px;top:825.5px;width:45.4px;height:45.4px;border-radius:50%;background:#f9f0f8"></div>
<div class="r" style="left:1669px;top:825.5px;width:255.6px;height:11.2px;border-radius:6px;background:#d6d9e2"></div>
<div class="r" style="left:1669px;top:842.6px;width:284.2px;height:11.2px;border-radius:6px;background:#d6d9e2"></div>
<div class="r" style="left:1669px;top:859.7px;width:45.4px;height:11.2px;border-radius:6px;background:#d6d9e2"></div>
<div class="r" style="left:1611.8999999999999px;top:894.0999999999999px;width:45.4px;height:45.4px;border-radius:50%;background:#f0fafa"></div>
<div class="r" style="left:1669px;top:894.1px;width:204.1px;height:11.2px;border-radius:6px;background:#d6d9e2"></div>
<div class="r" style="left:1669px;top:911.2px;width:128.8px;height:11.2px;border-radius:6px;background:#d6d9e2"></div>
<div class="r" style="left:1669px;top:928.3px;width:45.4px;height:11.2px;border-radius:6px;background:#d6d9e2"></div>
<div class="r" style="left:1611.8999999999999px;top:962.3px;width:45.4px;height:45.4px;border-radius:50%;background:#f9f0f8"></div>
<div class="r" style="left:1669px;top:962.3px;width:204.1px;height:11.2px;border-radius:6px;background:#d6d9e2"></div>
<div class="r" style="left:1669px;top:979.4px;width:232.7px;height:11.2px;border-radius:6px;background:#d6d9e2"></div>
<div class="r" style="left:1669px;top:996.5px;width:141.7px;height:11.2px;border-radius:6px;background:#d6d9e2"></div>
<div class="r" style="left:1669px;top:1013.6px;width:56.4px;height:11.2px;border-radius:6px;background:#d6d9e2"></div>
<div class="r" style="left:1611.8999999999999px;top:1047.6px;width:45.4px;height:45.4px;border-radius:50%;background:#f9f0f8"></div>
<div class="r" style="left:1669px;top:1047.6px;width:204.1px;height:11.2px;border-radius:6px;background:#d6d9e2"></div>
<div class="r" style="left:1669px;top:1064.7px;width:158.9px;height:11.2px;border-radius:6px;background:#d6d9e2"></div>
<div class="r" style="left:1669px;top:1081.8px;width:56.4px;height:11.2px;border-radius:6px;background:#d6d9e2"></div>
<div class="r" style="left:1611.8999999999999px;top:1115.7px;width:45.4px;height:45.4px;border-radius:50%;background:#f9f0f8"></div>
<div class="r" style="left:1669px;top:1115.7px;width:204.1px;height:11.2px;border-radius:6px;background:#d6d9e2"></div>
<div class="r" style="left:1669px;top:1130.0px;width:284.2px;height:11.2px;border-radius:6px;background:#d6d9e2"></div>
<div class="r" style="left:1669px;top:1144.3px;width:56.4px;height:11.2px;border-radius:6px;background:#d6d9e2"></div>
<div class="r" style="left:1601px;top:1233.8px;width:99px;height:17px;background:#c5c8d1;border-radius:9px"></div>
<div class="r" style="left:85px;top:1488.6px;width:1963px;height:1.4px;background:#c9cacd;"></div>
<div class="r" style="left:2045.5px;top:331px;width:1px;height:1158px;background:#e8e9ec;"></div>
<div class="r" style="left:2046.5px;top:331px;width:1.5px;height:1158px;background:#fafbfb;"></div>
</body></html>
